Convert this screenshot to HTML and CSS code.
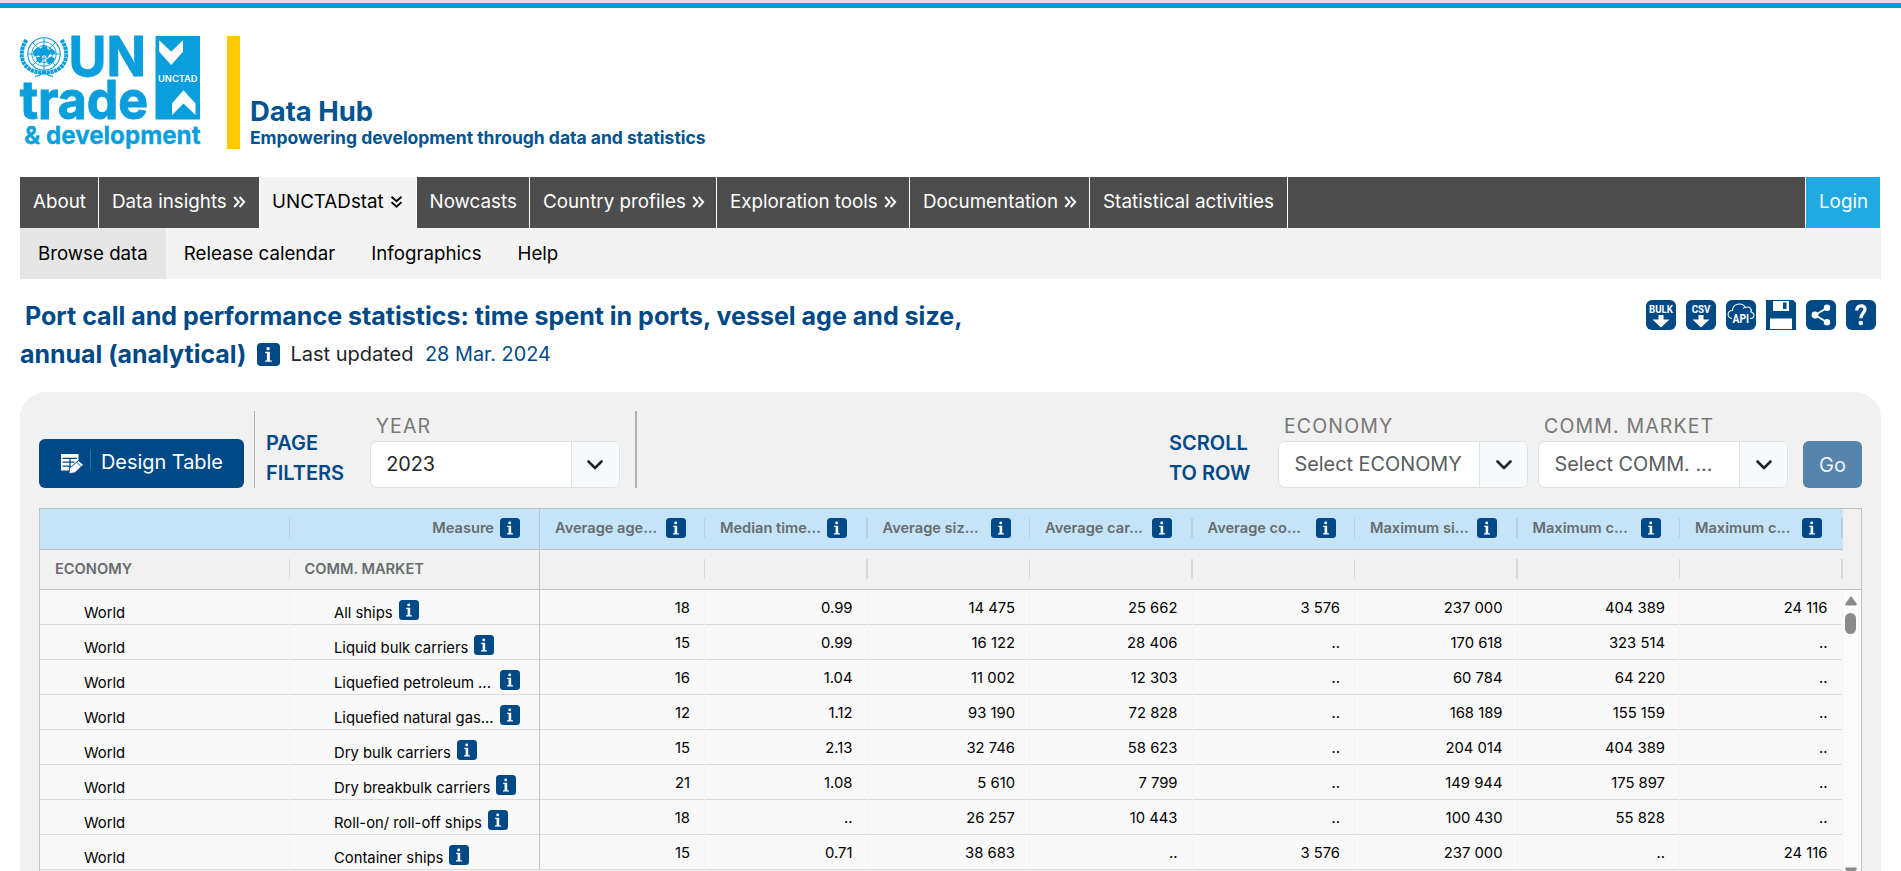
FILE: index.html
```html
<!DOCTYPE html>
<html lang="en">
<head>
<meta charset="utf-8">
<title>Port call and performance statistics - Data Hub</title>
<link rel="stylesheet" href="styles.css">
</head>
<body>
<svg class="defs" aria-hidden="true">
  <symbol id="info" viewBox="0 0 20 20">
    <rect width="20" height="20" rx="3.5" fill="#004987"/>
    <circle cx="9.700" cy="4.900" r="1.450" fill="#fff"/>
    <path d="M7.200 7.700h4v7.500h1.700v1.200H7v-1.200h1.600V8.900H7.200z" fill="#fff"/>
  </symbol>
  <symbol id="more" viewBox="0 0 13 12">
    <path d="M1.2 1l4.600 5-4.600 5M6.600 1l4.600 5-4.600 5" fill="none" stroke="currentColor" stroke-width="1.900"/>
  </symbol>
  <symbol id="chevron" viewBox="0 0 16 10">
    <path d="M1.5 1.5L8 8l6.500-6.500" fill="none" stroke="#212529" stroke-width="2.600" stroke-linecap="round" stroke-linejoin="round"/>
  </symbol>
</svg>

<div class="topline"></div>
<header class="brand">
  <svg class="logo" viewBox="0 0 182 114" role="img" aria-label="UN trade and development">
    <g fill="none" stroke="#0a9edd">
      <g stroke-width=".9">
        <circle cx="24" cy="18" r="16.200" stroke-width="1.100"/>
        <circle cx="24" cy="18" r="12.300"/>
        <circle cx="24" cy="18" r="8.500"/>
        <circle cx="24" cy="18" r="4.500"/>
        <path d="M7.800 18h32.400M24 1.800v32.400M12.500 6.500l23 23M35.500 6.500l-23 23"/>
      </g>
      <path d="M6.500 4C0 13 0 25 7.500 31.500c4.500 4 10 5 16.500 5M41.500 4C48 13 48 25 40.500 31.500c-4.500 4-10 5-16.500 5" stroke-width="4" stroke-dasharray="3.200 .6"/>
      <path d="M15 40.500c4-.5 6.500-2 9-4 2.500 2 5 3.500 9 4" stroke-width="1.200"/>
    </g>
    <path d="M13 15.500l4-4 4 1 2-3 4 1 1 4 4-2 4 4-3 2-3-1-2 3-4-2-3 2-3-1-4 1zM16 21.500l5-1 2 3-3 4-3-2zM26 23.500l5-3 4 2-2 4-5 2z" fill="#0a9edd"/>
    <g class="logo-word">
      <text x="48.500" y="39.700" font-size="54.500" textLength="77.500" lengthAdjust="spacingAndGlyphs">UN</text>
      <text x="-.3" y="83" font-size="54" textLength="128.500" lengthAdjust="spacingAndGlyphs">trade</text>
      <text class="thin" x="4" y="107.500" font-size="24.600" textLength="176.500" lengthAdjust="spacingAndGlyphs">&amp; development</text>
    </g>
    <path d="M135.500 0H180v83.500h-44.500z" fill="#0a9edd"/>
    <path d="M139.200 4.200v11.500l12 13.300L163 15.700V4.200l-11.800 11.500zM175.500 79V67.500l-12-13.300L152 67.500V79l11.500-11.500z" fill="#fff"/>
    <text class="logo-tag" x="138" y="46" font-size="9" textLength="39.500" lengthAdjust="spacingAndGlyphs">UNCTAD</text>
  </svg>
  <div class="brand-bar"></div>
  <div class="brand-text">
    <div class="brand-name">Data Hub</div>
    <div class="brand-motto">Empowering development through data and statistics</div>
  </div>
</header>

<nav class="nav">
  <a class="w-about">About</a>
  <a class="w-insights">Data insights <svg class="more"><use href="#more"/></svg></a>
  <a class="w-stat active">UNCTADstat <svg class="more down"><use href="#more"/></svg></a>
  <a class="w-now">Nowcasts</a>
  <a class="w-country">Country profiles <svg class="more"><use href="#more"/></svg></a>
  <a class="w-tools">Exploration tools <svg class="more"><use href="#more"/></svg></a>
  <a class="w-docs">Documentation <svg class="more"><use href="#more"/></svg></a>
  <a class="w-activities">Statistical activities</a>
  <a class="login">Login</a>
</nav>
<nav class="subnav">
  <a class="current">Browse data</a><a>Release calendar</a><a>Infographics</a><a>Help</a>
</nav>

<section class="heading">
  <div class="title">
    <h1>Port call and performance statistics: time spent in ports, vessel age and size,</h1>
    <div class="title-line">
      <h1>annual (analytical)</h1>
      <svg class="title-info"><use href="#info"/></svg>
      <span class="updated">Last updated</span>
      <span class="date">28 Mar. 2024</span>
    </div>
  </div>
  <div class="tools">
    <svg viewBox="0 0 30 30"><rect width="30" height="30" rx="6" fill="#004987"/><text x="3" y="13" font-size="11.500" textLength="24" lengthAdjust="spacingAndGlyphs">BULK</text><path d="M12.500 15h5v4.500h6L15 27.500 6.500 19.500h6z" fill="#fff"/></svg>
    <svg viewBox="0 0 30 30"><rect width="30" height="30" rx="6" fill="#004987"/><text x="5.700" y="13" font-size="11.500" textLength="18.800" lengthAdjust="spacingAndGlyphs">CSV</text><path d="M12.500 15h5v4.500h6L15 27.500 6.500 19.500h6z" fill="#fff"/></svg>
    <svg viewBox="0 0 30 30"><rect width="30" height="30" rx="6" fill="#004987"/><path d="M6 18.500C.5 17.500 1 10.500 6.500 10.500 6.500 4.500 15.500 1 19.500 7.500c4-1.500 6.500 1 5.500 4.500 4.500 1.500 3.500 6.500-.8 6.500M17 8.500c1-1.200 2-1.500 3-1.200" fill="none" stroke="#fff" stroke-width="1.100"/><text x="6.500" y="23" font-size="12" textLength="16.500" lengthAdjust="spacingAndGlyphs">API</text></svg>
    <svg viewBox="0 0 30 30"><path d="M0 0h27l3 3v27H0z" fill="#004987"/><path d="M7 1h16v10H7zM4 18.500h22V29H4z" fill="#fff"/><path d="M17 2.500h3.500V9H17z" fill="#004987"/></svg>
    <svg viewBox="0 0 30 30"><rect width="30" height="30" rx="6" fill="#004987"/><path d="M21 8L9 15l12 7.200" fill="none" stroke="#fff" stroke-width="1.900"/><g fill="#fff"><circle cx="21" cy="7.800" r="3.200"/><circle cx="9" cy="15" r="3.400"/><circle cx="21" cy="22.300" r="3.200"/></g></svg>
    <svg viewBox="0 0 30 30"><rect width="30" height="30" rx="6" fill="#004987"/><path d="M10.800 10.500c0-6 8.200-6 8.200-1.200 0 3.700-4.200 4-4.200 9" fill="none" stroke="#fff" stroke-width="3.300"/><circle cx="14.800" cy="23" r="2.300" fill="#fff"/></svg>
  </div>
</section>

<main class="panel">
  <div class="filters">
    <button class="design">
      <svg viewBox="0 0 24 20"><path d="M1 0h17.500v6L9.500 15v1.500H1z" fill="#fff"/><path d="M2.500 4.300h14.500M2.500 8.200h12M2.500 12.200h8M10 4v10" stroke="#004987" stroke-width="1.300"/><path d="M8.800 19.700l1-5.700 8.700-7.500 5 4.300-8.700 8z" fill="#fff" stroke="#004987" stroke-width=".9"/><path d="M16.500 8.300l4.700 4.200" stroke="#004987" stroke-width=".8"/></svg>
      <i></i><span>Design Table</span>
    </button>
    <i class="rule first"></i>
    <div class="caption">PAGE<br>FILTERS</div>
    <div class="field year">
      <label>YEAR</label>
      <div class="select"><span>2023</span><b><svg><use href="#chevron"/></svg></b></div>
    </div>
    <i class="rule second"></i>
    <div class="caption scroll">SCROLL<br>TO ROW</div>
    <div class="field economy">
      <label>ECONOMY</label>
      <div class="select empty"><span>Select ECONOMY</span><b><svg><use href="#chevron"/></svg></b></div>
    </div>
    <div class="field market">
      <label>COMM. MARKET</label>
      <div class="select empty"><span>Select COMM. ...</span><b><svg><use href="#chevron"/></svg></b></div>
    </div>
    <button class="go">Go</button>
  </div>

  <div class="grid">
    <div class="grid-main">
      <div class="row head">
        <div></div><div class="measure">Measure<svg><use href="#info"/></svg></div>
        <div><span>Average age...</span><svg><use href="#info"/></svg></div>
        <div><span>Median time...</span><svg><use href="#info"/></svg></div>
        <div><span>Average siz...</span><svg><use href="#info"/></svg></div>
        <div><span>Average car...</span><svg><use href="#info"/></svg></div>
        <div><span>Average co...</span><svg><use href="#info"/></svg></div>
        <div><span>Maximum si...</span><svg><use href="#info"/></svg></div>
        <div><span>Maximum c...</span><svg><use href="#info"/></svg></div>
        <div><span>Maximum c...</span><svg><use href="#info"/></svg></div>
      </div>
      <div class="row head sub">
        <div><span>ECONOMY</span></div><div><span>COMM. MARKET</span></div><div></div><div></div><div></div><div></div><div></div><div></div><div></div><div></div>
      </div>
      <div class="row data"><div>World</div><div>All ships<svg><use href="#info"/></svg></div><div>18</div><div>0.99</div><div>14 475</div><div>25 662</div><div>3 576</div><div>237 000</div><div>404 389</div><div>24 116</div></div>
      <div class="row data"><div>World</div><div>Liquid bulk carriers<svg><use href="#info"/></svg></div><div>15</div><div>0.99</div><div>16 122</div><div>28 406</div><div>..</div><div>170 618</div><div>323 514</div><div>..</div></div>
      <div class="row data"><div>World</div><div class="clip"><span>Liquefied petroleum ...</span><svg><use href="#info"/></svg></div><div>16</div><div>1.04</div><div>11 002</div><div>12 303</div><div>..</div><div>60 784</div><div>64 220</div><div>..</div></div>
      <div class="row data"><div>World</div><div class="clip"><span>Liquefied natural gas...</span><svg><use href="#info"/></svg></div><div>12</div><div>1.12</div><div>93 190</div><div>72 828</div><div>..</div><div>168 189</div><div>155 159</div><div>..</div></div>
      <div class="row data"><div>World</div><div>Dry bulk carriers<svg><use href="#info"/></svg></div><div>15</div><div>2.13</div><div>32 746</div><div>58 623</div><div>..</div><div>204 014</div><div>404 389</div><div>..</div></div>
      <div class="row data"><div>World</div><div>Dry breakbulk carriers<svg><use href="#info"/></svg></div><div>21</div><div>1.08</div><div>5 610</div><div>7 799</div><div>..</div><div>149 944</div><div>175 897</div><div>..</div></div>
      <div class="row data"><div>World</div><div>Roll-on/ roll-off ships<svg><use href="#info"/></svg></div><div>18</div><div>..</div><div>26 257</div><div>10 443</div><div>..</div><div>100 430</div><div>55 828</div><div>..</div></div>
      <div class="row data"><div>World</div><div>Container ships<svg><use href="#info"/></svg></div><div>15</div><div>0.71</div><div>38 683</div><div>..</div><div>3 576</div><div>237 000</div><div>..</div><div>24 116</div></div>
    </div>
    <div class="gutter">
      <div class="gutter-head"></div>
      <div class="track">
        <svg viewBox="0 0 12 10"><path d="M5 1.200Q6 0 7 1.200L11.500 7.500Q12.300 9.500 10.500 9.500h-9Q-.3 9.500.5 7.500z" fill="#8b8b8b"/></svg>
        <div class="thumb"></div>
        <svg class="end" viewBox="0 0 12 10"><path d="M5 8.800Q6 10 7 8.800L11.500 2.500Q12.300 .5 10.500 .5h-9Q-.3 .5.5 2.500z" fill="#8b8b8b"/></svg>
      </div>
    </div>
  </div>
</main>
</body>
</html>
```
FILE: styles.css
```css
* { box-sizing: border-box; }
html, body { height: 871px; overflow: hidden; }
body { margin: 0; padding: 0 20px; background: #fff; color: #000; font-family: Inter, "Liberation Sans", sans-serif; font-size: 18.800px; }
svg { display: block; flex: none; }
h1 { margin: 0; font-size: 24.950px; line-height: 38px; font-weight: 700; color: #004987; }
button { border: 0; padding: 0; font: inherit; color: #fff; }
.defs { position: absolute; width: 0; height: 0; }

.topline { margin: 0 -20px; height: 8px; border-top: 3px solid #dedede; background: #009edb; }

.brand { display: flex; height: 169px; padding-top: 28px; }
.logo { width: 182px; height: 114px; overflow: visible; }
.logo-word { font-weight: 700; fill: #0a9edd; stroke: #0a9edd; stroke-width: 1px; }
.logo-word .thin { stroke-width: .3px; }
.logo-tag { font-weight: 600; fill: #fff; }
.brand-bar { width: 13px; height: 113px; margin-left: 25px; background: #ffc800; }
.brand-text { margin-left: 10px; padding-top: 59px; font-weight: 700; color: #005493; }
.brand-name { font-size: 27.400px; line-height: 33px; }
.brand-motto { font-size: 17.490px; line-height: 20px; }

.nav { display: flex; height: 51px; background: #4d4d4d; color: #fff; }
.nav a { display: flex; align-items: center; height: 51px; padding: 0 0 2px 13px; border-right: 1px solid #fff; white-space: pre; }
.more { width: 13px; height: 12px; margin: 1px 0 0 1px; }
.more.down { transform: rotate(90deg); }
.w-about { width: 79px; }
.w-insights { width: 161px; }
.nav .w-stat { width: 157px; padding-left: 12px; }
.nav .w-now { width: 113px; padding-left: 12.500px; }
.w-country { width: 187px; }
.w-tools { width: 193px; }
.w-docs { width: 180px; }
.w-activities { width: 198px; font-size: 18.900px; }
.nav .active { background: #f3f3f3; color: #000; }
.nav .login { width: 76px; margin-left: auto; border-left: 1px solid #fff; background: #21a9e1; }

.subnav { display: flex; height: 51px; background: #f3f3f3; font-size: 18.700px; }
.subnav a { display: flex; align-items: center; padding: 0 18px 1px; }
.subnav .current { background: #e6e6e6; }

.heading { display: flex; justify-content: space-between; height: 113px; padding: 18px 5px 0 0; }
.title > h1 { padding-left: 5px; font-size: 25.040px; }
.title-line { display: flex; align-items: center; font-size: 19.850px; }
.title-info { width: 23px; height: 23px; margin: 0 10px 0 11px; }
.updated { color: #212529; font-size: 20px; }
.date { margin-left: 11.500px; color: #004987; }
.tools { display: flex; gap: 10px; padding-top: 3px; }
.tools svg { width: 30px; height: 30px; }
.tools text { font-family: Roboto, sans-serif; font-weight: 700; fill: #fff; }

.panel { height: 500px; padding: 19px 19px 0; border-radius: 26px 26px 0 0; background: #f1f1f1; }
.filters { display: flex; align-items: flex-end; height: 77px; }
.design { display: flex; align-items: center; width: 205px; height: 49px; padding-left: 21px; border-radius: 6px; background: #004987; font-size: 19.900px; }
.design svg { width: 24px; height: 20px; margin-top: 1px; }
.design i { width: 1px; height: 20px; margin: -9px 10px 0 6px; background: #33699b; }
.design span { padding-bottom: 3px; }
.rule { width: 1px; height: 77px; background: #b0b3b5; }
.rule.first { margin: 0 11px 0 10px; }
.rule.second { width: 2px; margin-left: 15px; }
.caption { height: 60px; font-size: 20px; line-height: 30px; font-weight: 600; color: #004987; white-space: nowrap; }
.caption.scroll { margin-left: auto; width: 109px; }
.field label { display: block; padding-left: 6px; font-size: 19.500px; line-height: 24px; letter-spacing: 1.150px; color: #777; }
.field { width: 250px; }
.year { margin-left: 25.500px; }
.market { margin-left: 10px; }
.select { display: flex; height: 47px; margin-top: 3px; border: 1px solid #dee2e6; border-radius: 7px; background: #fff; overflow: hidden; color: #212529; font-size: 19.850px; }
.select span { flex: 1; padding: 9px 0 0 15.500px; line-height: 26px; }
.select b { display: flex; align-items: center; justify-content: center; width: 48px; border-left: 1px solid #dee2e6; background: #f8f9fa; }
.select b svg { width: 16px; height: 10px; }
.select.empty { color: #595c5f; }
.go { width: 59px; height: 47px; margin-left: 15px; border-radius: 6px; background: #5584ad; color: #eef3f7; font-size: 20px; }

.grid { display: flex; width: 1823px; height: 400px; margin-top: 20px; border: 1px solid #bdc3c7; }
.grid-main { width: 1802.500px; }
.row { display: grid; grid-template-columns: 249.500px 250.500px 165px repeat(7, 162.500px); font-size: 14.800px; white-space: pre; }
.row svg { width: 20px; height: 20px; }
.row > :nth-child(2) { border-right: 1px solid #bdc3c7; }

.head { height: 41px; border-bottom: 1px solid #bdc3c7; background: #c5e4f7; color: #666c70; font-size: 14.620px; font-weight: 600; }
.head > div { display: flex; align-items: center; padding: 0 0 2px 15px; }
.head span { flex: 1; }
.head > div::after { content: ""; width: 1px; height: 20px; margin-left: 18.500px; background: #b9cfdd; }
.head > div:nth-child(4)::after, .head > div:nth-child(6)::after, .head > div:nth-child(8)::after, .head > div:nth-child(10)::after { width: 2px; }
.head > div:nth-child(1)::after { margin-left: auto; }
.head > div:nth-child(2)::after { display: none; }
.head .measure { justify-content: flex-end; gap: 6px; padding-right: 19px; }
.head.sub { height: 40px; background: #f1f1f1; }
.head.sub > div { padding-bottom: 1px; }
.head.sub > div::after { margin-left: auto; background: #d6d9dc; }

.data { height: 35px; grid-template-rows: 35px; background: #f9f9f9; }
.data > div { display: flex; justify-content: flex-end; padding: 0 14px 0 0; line-height: 36px; border-right: 1px solid #f4f4f4; box-shadow: inset 0 -1px #dadddf; }
.data > div:nth-child(-n+2) { justify-content: flex-start; padding: 5px 0 0 44px; }
.data > div:nth-child(2) { padding-left: 44.500px; }
.data > div:nth-child(-n+2) svg { margin: 5px 0 0 6px; }
.data > .clip svg { margin-left: 0 !important; }
.data > .clip span { width: 166px; }

.gutter { flex: 1; background: #fbfbfb; }
.gutter-head { height: 81px; border-bottom: 1px solid #bdc3c7; background: #f1f1f1; }
.track { display: flex; flex-direction: column; align-items: center; padding: 6px 2px 0 0; }
.track svg { width: 12px; height: 10px; }
.thumb { width: 11px; height: 21px; margin-top: 7px; border-radius: 6px; background: #8b8b8b; }
.track .end { margin-top: 233px; }
```
